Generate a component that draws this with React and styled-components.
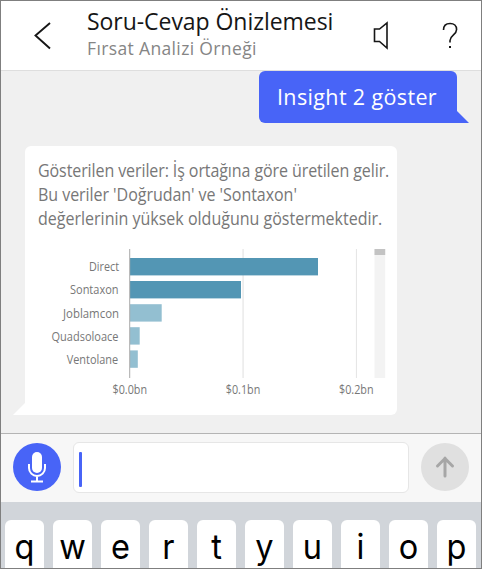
import React from "react";
import styled, { createGlobalStyle } from "styled-components";

const GlobalStyle = createGlobalStyle`
  * { box-sizing: border-box; }
  body { margin: 0; overflow: hidden; }
`;

const Screen = styled.div`
  width: 482px;
  height: 569px;
  border: 1px solid #7f7f7f;
  background: #f0f0f0;
  display: flex;
  flex-direction: column;
  overflow: hidden;
  font-family: "Open Sans", "Noto Sans", sans-serif;
`;

const Header = styled.header`
  flex: none;
  height: 70px;
  background: #fff;
  border-bottom: 1px solid #dedede;
  display: flex;
  align-items: flex-start;
`;

const IconButton = styled.button`
  flex: none;
  width: ${(p) => p.$width}px;
  height: 69px;
  padding: 0;
  border: 0;
  background: none;
  svg { display: block; }
`;

const Titles = styled.div`
  flex: 1;
  min-width: 0;
  padding-top: 5px;
`;

const Title = styled.h1`
  margin: 0;
  white-space: nowrap;
  font-weight: 400;
  font-size: 23px;
  line-height: 31px;
  letter-spacing: -0.05px;
  color: #161616;
`;

const Subtitle = styled.div`
  white-space: nowrap;
  font-size: 17.5px;
  line-height: 22px;
  letter-spacing: 0.36px;
  color: #858585;
`;

const Chat = styled.main`
  flex: none;
  height: 362px;
  display: flex;
  flex-direction: column;
`;

const Sent = styled.div`
  position: relative;
  align-self: flex-end;
  width: 198px;
  height: 52px;
  margin-right: 24px;
  padding: 11px 0 0 18px;
  border-radius: 6px 6px 0 6px;
  background: #4864f7;
  color: #fff;
  white-space: nowrap;
  font-size: 21.5px;
  line-height: 30px;
  letter-spacing: 0.36px;
`;

const Tail = styled.svg`
  position: absolute;
  bottom: 0;
  ${(p) => p.$side}: -12px;
`;

const Received = styled.div`
  position: relative;
  width: 372px;
  height: 269px;
  margin: 23px 0 0 24px;
  padding: 12px 0 0 12.5px;
  border-radius: 6px 6px 6px 0;
  background: #fff;
`;

const MessageLine = styled.div`
  width: max-content;
  white-space: nowrap;
  font-size: 17.5px;
  line-height: 24px;
  letter-spacing: ${(p) => p.$tracking}px;
  color: #777;
  transform: scaleX(0.916);
  transform-origin: left;
`;

const Chart = styled.svg`
  display: block;
  margin: 12px 0 0 -12.5px;
  font-family: "Open Sans", "Noto Sans", sans-serif;
  font-size: 12.5px;
  fill: #777;
`;

const Composer = styled.div`
  flex: none;
  height: 69px;
  border-top: 1px solid #b4b4b4;
  background: #f7f7f7;
  display: flex;
  gap: 12px;
  padding: 8px 12px 0;
`;

const RoundButton = styled.button`
  flex: none;
  width: 48px;
  height: 48px;
  margin-top: 1px;
  padding: 0;
  border: 0;
  border-radius: 50%;
  background: ${(p) => p.$fill};
  svg { display: block; }
`;

const Field = styled.div`
  flex: 1;
  height: 51px;
  border: 1px solid #e6e6e6;
  border-radius: 6px;
  background: #fff;
  padding: 9px 0 0 5px;
`;

const Caret = styled.div`
  width: 3px;
  height: 35px;
  border-radius: 1px;
  background: #4864f7;
`;

const Keyboard = styled.div`
  flex: 1;
  background: #d1d5da;
  display: flex;
  gap: 9px;
  padding: 18px 0 0 4.4px;
`;

const Key = styled.div`
  flex: none;
  width: 39px;
  height: 60px;
  border-radius: 6px;
  background: #fff;
  color: #000;
  font: 400 35px/53px Inter, sans-serif;
  text-align: center;
`;

const KeyCap = styled.span`
  display: block;
  transform: scaleX(0.93);
`;

const message = [
  { text: "Gösterilen veriler: İş ortağına göre üretilen gelir.", tracking: -0.11 },
  { text: "Bu veriler 'Doğrudan' ve 'Sontaxon'", tracking: -0.06 },
  { text: "değerlerinin yüksek olduğunu göstermektedir.", tracking: -0.01 },
];

const bars = [
  { name: "Direct", y: 9, width: 188, x: 64, color: "#5396b4", label: 30 },
  { name: "Sontaxon", y: 32, width: 111, x: 45, color: "#5396b4", label: 48.5 },
  { name: "Joblamcon", y: 55.2, width: 31.7, x: 38, color: "#93bfd1", label: 56 },
  { name: "Quadsoloace", y: 78.2, width: 9.7, x: 26.5, color: "#93bfd1", label: 67 },
  { name: "Ventolane", y: 101.4, width: 7.8, x: 41.7, color: "#93bfd1", label: 51.5 },
];

const ticks = [
  { text: "$0.0bn", x: 87.5 },
  { text: "$0.1bn", x: 200.8 },
  { text: "$0.2bn", x: 314 },
];

export default function App() {
  return (
    <>
      <GlobalStyle />
      <Screen>
        <Header>
          <IconButton $width={86} aria-label="Geri">
            <svg width="86" height="69" fill="none" stroke="#161616" strokeWidth="1.9">
              <path d="M49 22 34.500 34.500 49 47.500" />
            </svg>
          </IconButton>
          <Titles>
            <Title>Soru-Cevap Önizlemesi</Title>
            <Subtitle>Fırsat Analizi Örneği</Subtitle>
          </Titles>
          <IconButton $width={60} aria-label="Ses">
            <svg width="60" height="69" fill="none" stroke="#161616" strokeWidth="1.6">
              <path d="M26 22v25l-7.500-6.500h-5v-12.500h5Z" />
            </svg>
          </IconButton>
          <IconButton $width={60} aria-label="Yardım">
            <svg width="60" height="69" fill="none" stroke="#161616" strokeWidth="1.6">
              <path d="M22.500 29c0-4 2.600-6.500 6.600-6.500s6.500 2.500 6.500 6c0 5.500-6.600 5.800-6.600 11v2" />
              <path d="M29 45v2" strokeWidth="2" />
            </svg>
          </IconButton>
        </Header>
        <Chat>
          <Sent>
            Insight 2 göster
            <Tail $side="right" width="13" height="13" fill="#4864f7"><path d="M0 0 13 13H0Z" /></Tail>
          </Sent>
          <Received>
            {message.map((m) => (
              <MessageLine key={m.text} $tracking={m.tracking}>{m.text}</MessageLine>
            ))}
            <Chart width="372" height="160" viewBox="0 0 372 160">
              <g transform="translate(0 7)">
                <rect x="217.300" width="1.600" height="129" fill="#ebebeb" />
                <rect x="330.900" width="1" height="129" fill="#e4e4e4" />
                <rect x="349.500" width="10.700" height="129" fill="#f3f3f3" />
                <rect x="349.500" width="10.700" height="6" fill="#c3c3c3" />
                {bars.map((b) => (
                  <g key={b.name}>
                    <text x={b.x} y={b.y + 13.3} textLength={b.label} lengthAdjust="spacingAndGlyphs">{b.name}</text>
                    <rect x="105" y={b.y} width={b.width} height="17.400" fill={b.color} />
                  </g>
                ))}
                <rect x="104.200" width="1" height="129" fill="#aaa" />
                {ticks.map((t) => (
                  <text key={t.text} x={t.x} y="144.500" textLength="34.500" lengthAdjust="spacingAndGlyphs">{t.text}</text>
                ))}
              </g>
            </Chart>
            <Tail $side="left" width="13" height="13" fill="#fff"><path d="M13 0 0 13H13Z" /></Tail>
          </Received>
        </Chat>
        <Composer>
          <RoundButton $fill="#4864f7" aria-label="Mikrofon">
            <svg width="48" height="48" fill="none" stroke="#fff" strokeWidth="2">
              <rect x="19" y="9" width="10" height="21" rx="5" fill="#fff" stroke="none" />
              <path d="M16 21v4a8 8 0 0 0 16 0v-4M24 33v5M18 38.500h12" />
            </svg>
          </RoundButton>
          <Field><Caret /></Field>
          <RoundButton $fill="#e0e0e0" aria-label="Gönder">
            <svg width="48" height="48" fill="none" stroke="#a6a6a6" strokeWidth="3" strokeLinecap="round" strokeLinejoin="round">
              <path d="M24 33V15M16.500 23 24 15.500 31.500 23" />
            </svg>
          </RoundButton>
        </Composer>
        <Keyboard>
          {"qwertyuiop".split("").map((k) => <Key key={k}><KeyCap>{k}</KeyCap></Key>)}
        </Keyboard>
      </Screen>
    </>
  );
}
